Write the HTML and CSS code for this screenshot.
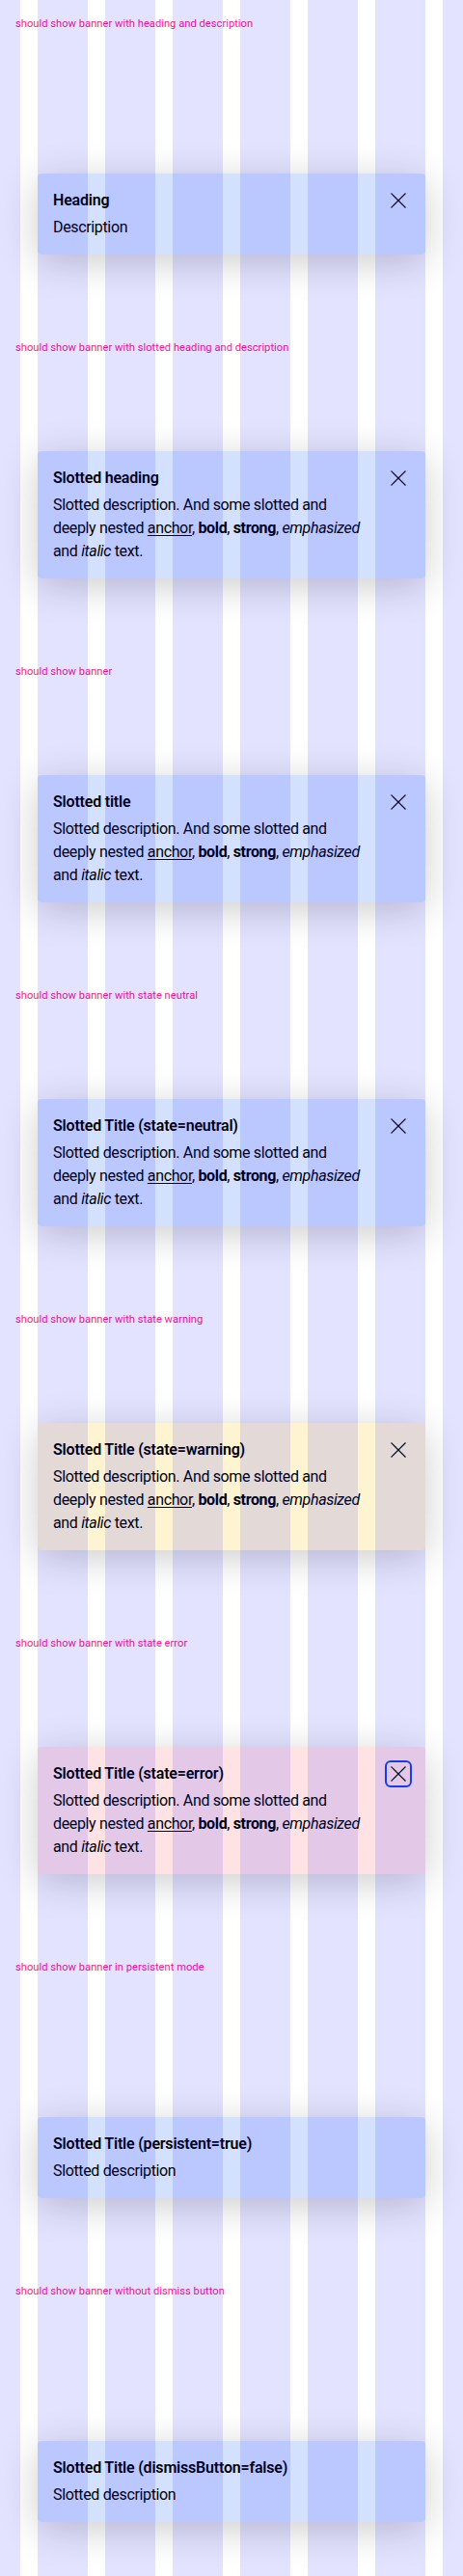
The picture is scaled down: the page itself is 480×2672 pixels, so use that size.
FILE: index.html
```html
<!DOCTYPE html>
<html lang="en">
<head>
<meta charset="utf-8">
<title>Banner</title>
<link rel="stylesheet" href="styles.css">
</head>
<body>
<main class="page">
  <section class="playground">
    <p class="label">should show banner with heading and description</p>
    <div class="banner banner--info">
      <div class="banner__content">
        <h5 class="banner__heading">Heading</h5>
        <p class="banner__description">Description</p>
      </div>
      <button class="banner__close" type="button" aria-label="Close"><svg viewBox="0 0 24 24" width="24" height="24"><path d="M4.5 4.5L19.5 19.5M19.5 4.5L4.5 19.5"/></svg></button>
    </div>
  </section>

  <section class="playground">
    <p class="label">should show banner with slotted heading and description</p>
    <div class="banner banner--info">
      <div class="banner__content">
        <h5 class="banner__heading">Slotted heading</h5>
        <p class="banner__description">Slotted description. And some slotted and deeply nested <a href="#">anchor</a>, <b>bold</b>, <strong>strong</strong>, <em>emphasized</em> and <i>italic</i> text.</p>
      </div>
      <button class="banner__close" type="button" aria-label="Close"><svg viewBox="0 0 24 24" width="24" height="24"><path d="M4.5 4.5L19.5 19.5M19.5 4.5L4.5 19.5"/></svg></button>
    </div>
  </section>

  <section class="playground">
    <p class="label">should show banner</p>
    <div class="banner banner--info">
      <div class="banner__content">
        <h5 class="banner__heading">Slotted title</h5>
        <p class="banner__description">Slotted description. And some slotted and deeply nested <a href="#">anchor</a>, <b>bold</b>, <strong>strong</strong>, <em>emphasized</em> and <i>italic</i> text.</p>
      </div>
      <button class="banner__close" type="button" aria-label="Close"><svg viewBox="0 0 24 24" width="24" height="24"><path d="M4.5 4.5L19.5 19.5M19.5 4.5L4.5 19.5"/></svg></button>
    </div>
  </section>

  <section class="playground">
    <p class="label">should show banner with state neutral</p>
    <div class="banner banner--info">
      <div class="banner__content">
        <h5 class="banner__heading">Slotted Title (state=neutral)</h5>
        <p class="banner__description">Slotted description. And some slotted and deeply nested <a href="#">anchor</a>, <b>bold</b>, <strong>strong</strong>, <em>emphasized</em> and <i>italic</i> text.</p>
      </div>
      <button class="banner__close" type="button" aria-label="Close"><svg viewBox="0 0 24 24" width="24" height="24"><path d="M4.5 4.5L19.5 19.5M19.5 4.5L4.5 19.5"/></svg></button>
    </div>
  </section>

  <section class="playground">
    <p class="label">should show banner with state warning</p>
    <div class="banner banner--warning">
      <div class="banner__content">
        <h5 class="banner__heading">Slotted Title (state=warning)</h5>
        <p class="banner__description">Slotted description. And some slotted and deeply nested <a href="#">anchor</a>, <b>bold</b>, <strong>strong</strong>, <em>emphasized</em> and <i>italic</i> text.</p>
      </div>
      <button class="banner__close" type="button" aria-label="Close"><svg viewBox="0 0 24 24" width="24" height="24"><path d="M4.5 4.5L19.5 19.5M19.5 4.5L4.5 19.5"/></svg></button>
    </div>
  </section>

  <section class="playground">
    <p class="label">should show banner with state error</p>
    <div class="banner banner--error">
      <div class="banner__content">
        <h5 class="banner__heading">Slotted Title (state=error)</h5>
        <p class="banner__description">Slotted description. And some slotted and deeply nested <a href="#">anchor</a>, <b>bold</b>, <strong>strong</strong>, <em>emphasized</em> and <i>italic</i> text.</p>
      </div>
      <button class="banner__close banner__close--focus" type="button" aria-label="Close"><svg viewBox="0 0 24 24" width="24" height="24"><path d="M4.5 4.5L19.5 19.5M19.5 4.5L4.5 19.5"/></svg></button>
    </div>
  </section>

  <section class="playground">
    <p class="label">should show banner in persistent mode</p>
    <div class="banner banner--info">
      <div class="banner__content">
        <h5 class="banner__heading">Slotted Title (persistent=true)</h5>
        <p class="banner__description">Slotted description</p>
      </div>
    </div>
  </section>

  <section class="playground">
    <p class="label">should show banner without dismiss button</p>
    <div class="banner banner--info">
      <div class="banner__content">
        <h5 class="banner__heading">Slotted Title (dismissButton=false)</h5>
        <p class="banner__description">Slotted description</p>
      </div>
    </div>
  </section>
</main>
<div class="grid-overlay" aria-hidden="true"></div>
</body>
</html>
```

FILE: styles.css
```css
html, body {
  margin: 0;
  padding: 0;
}

body {
  background: #ffffff;
  color: #010205;
  font-family: Roboto, "Liberation Sans", sans-serif;
}

.page {
  display: flex;
  flex-direction: column;
  gap: 16px;
}

.playground {
  height: 320px;
  display: flex;
  flex-direction: column;
}

.label {
  margin: 0;
  padding: 16px 16px 0;
  font-size: 11.2px;
  line-height: 18px;
  color: #ff1493;
}

.banner {
  margin: auto 39px 56px;
  display: flex;
  align-items: flex-start;
  gap: 16px;
  padding: 16px;
  border-radius: 4px;
  box-shadow: 0 8px 40px rgba(0, 0, 0, 0.2);
}

.banner--info {
  background: #d3e1ff;
}

.banner--warning {
  background: #fff4d2;
}

.banner--error {
  background: #ffe2e4;
}

.banner__content {
  flex: 1;
  min-width: 0;
  display: flex;
  flex-direction: column;
  gap: 4px;
}

.banner__heading {
  margin: 0;
  font-size: 16px;
  line-height: 24px;
  font-weight: 600;
  letter-spacing: -0.2px;
}

.banner__description {
  margin: 0;
  font-size: 16px;
  line-height: 24px;
  font-weight: 400;
  letter-spacing: -0.35px;
}

.banner__description a {
  color: inherit;
  text-decoration: underline;
  text-underline-offset: 2px;
}

.banner__description b,
.banner__description strong {
  font-weight: 700;
}

.banner__close {
  flex: none;
  width: 24px;
  height: 24px;
  padding: 0;
  border: 0;
  border-radius: 4px;
  background: transparent;
  display: flex;
  align-items: center;
  justify-content: center;
  cursor: pointer;
}

.banner__close svg {
  display: block;
  fill: none;
  stroke: #010205;
  stroke-width: 1.1;
}

.banner__close--focus {
  outline: 2px solid #1a44ea;
  outline-offset: 0;
}

.grid-overlay {
  position: fixed;
  inset: 0;
  pointer-events: none;
  background-image: linear-gradient(to right, rgba(0, 0, 255, 0.11) 52px, transparent 52px);
  background-size: 70px 100%;
  background-position: 39px 0;
  background-repeat: repeat-x;
}
```
